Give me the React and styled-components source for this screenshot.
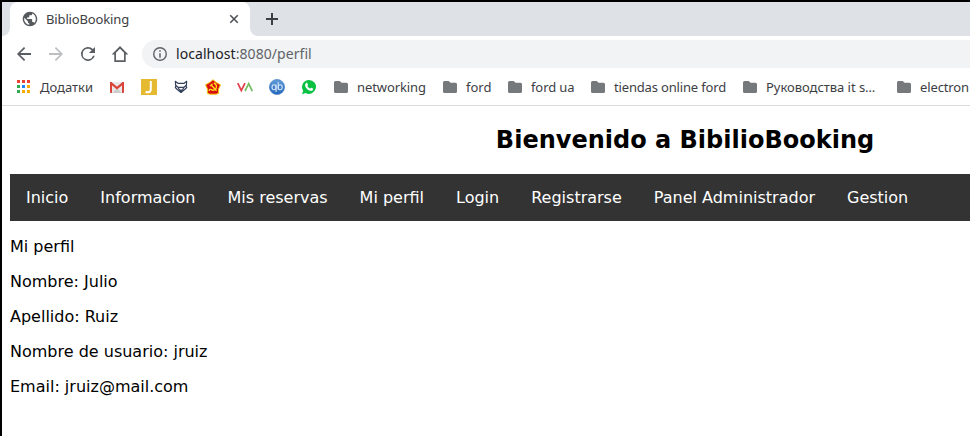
import React from "react";
import styled, { createGlobalStyle } from "styled-components";

const Global = createGlobalStyle`
  * { box-sizing: border-box; }
  html, body { margin: 0; padding: 0; background: #fff; overflow: hidden; }
`;

const Window = styled.div`
  width: 970px;
  height: 436px;
  overflow: hidden;
  background: #fff;
  border-top: 2px solid #000;
  border-left: 2px solid #000;
  font-family: "Noto Sans", sans-serif;
  color: #3c4043;
`;

const TabStrip = styled.div`
  display: flex;
  height: 34px;
  background: linear-gradient(#dee1e6, #dee1e6) 0 0 / 100% 12px no-repeat;
`;

const StripStart = styled.div`
  width: 8px;
  flex: none;
  background: #dee1e6;
  border-bottom-right-radius: 8px;
`;

const Tab = styled.div`
  display: flex;
  align-items: center;
  width: 240px;
  flex: none;
  padding: 0 10px 0 12px;
  background: #fff;
  border-radius: 8px 8px 0 0;
  font-size: 13px;
`;

const TabTitle = styled.span`
  flex: 1;
  margin-left: 8px;
  line-height: 18px;
  letter-spacing: -0.14px;
`;

const StripRest = styled.div`
  display: flex;
  align-items: center;
  flex: 1;
  padding-left: 15px;
  background: #dee1e6;
  border-bottom-left-radius: 8px;
`;

const Toolbar = styled.div`
  display: flex;
  align-items: center;
  height: 36px;
  padding-left: 11px;
`;

const ToolIcon = styled.svg`
  display: block;
  flex: none;
  width: 22px;
  height: 22px;
  margin-right: 10px;
  fill: ${(p) => (p.$muted ? "#bdbfc1" : "#5a5e63")};
`;

const AddressBar = styled.div`
  display: flex;
  align-items: center;
  flex: 1;
  height: 28px;
  margin-left: 1px;
  padding-left: 10px;
  border-radius: 14px 0 0 14px;
  background: #f1f3f4;
  font-size: 14px;
  line-height: 20px;
  letter-spacing: 0.06px;
  color: #5f6368;
`;

const Host = styled.span`
  margin-left: 8px;
  color: #202124;
`;

const Bookmarks = styled.div`
  display: flex;
  align-items: center;
  height: 34px;
  padding: 0 0 3px 13px;
  border-bottom: 1px solid #dadce0;
  font-size: 13px;
  line-height: 18px;
  white-space: nowrap;
`;

const Bookmark = styled.div`
  display: flex;
  align-items: center;
  flex: none;
  width: ${(p) => p.$w}px;
`;

const BookmarkLabel = styled.span`
  margin-left: ${(p) => p.$gap || 8}px;
  letter-spacing: ${(p) => p.$track || 0}px;
`;

const Glyph = styled.svg`
  display: block;
  flex: none;
  width: ${(p) => p.$s || 16}px;
  height: ${(p) => p.$s || 16}px;
`;

const Page = styled.main`
  width: 1366px;
  padding: 18px 8px 0;
  font-family: "DejaVu Sans", sans-serif;
  font-size: 16px;
  line-height: 19px;
  color: #000;
`;

const Title = styled.h2`
  margin: 0 0 18px;
  font-size: 24px;
  line-height: 32px;
  font-weight: bold;
  text-align: center;
`;

const Nav = styled.nav`
  display: flex;
  height: 47px;
  background: #333;
`;

const NavLink = styled.a`
  padding: 14px 16px;
  color: #fff;
`;

const Line = styled.p`
  margin: 16px 0;
`;

const Folder = () => (
  <Glyph viewBox="0 0 16 16">
    <path fill="#75797c" d="M2.500 2h4.200l1.800 1.800h5A1.500 1.500 0 0 1 15 5.300v7.200A1.500 1.500 0 0 1 13.500 14h-11A1.500 1.500 0 0 1 1 12.500v-9A1.500 1.500 0 0 1 2.500 2z" />
  </Glyph>
);

const Apps = () => {
  const colors = ["#ea4335", "#ea4335", "#ea4335", "#34a853", "#1a85f5", "#f9ab00", "#34a853", "#f9ab00", "#f9ab00"];
  return (
    <Glyph viewBox="0 0 16 16" shapeRendering="crispEdges">
      {colors.map((c, i) => (
        <rect key={i} x={2 + (i % 3) * 5} y={1 + Math.floor(i / 3) * 5} width="3" height="3" fill={c} />
      ))}
    </Glyph>
  );
};

const Mail = () => (
  <Glyph viewBox="0 0 16 16">
    <path fill="#e9e7e7" d="M1 3h14v11H1z" />
    <path fill="#cfcccc" d="M3.500 14 8 9l4.500 5z" />
    <path fill="#d9453a" d="M1 3h2v11H2a1 1 0 0 1-1-1zM13 3h2v10a1 1 0 0 1-1 1h-1z" />
    <path fill="none" stroke="#d9453a" strokeWidth="2.200" d="M1.700 3.800 8 9l6.300-5.200" />
  </Glyph>
);

const JobSite = () => (
  <Glyph viewBox="0 0 16 16">
    <path fill="#e5ba31" d="M0 0h16v16H0z" />
    <path fill="none" stroke="#fff" strokeWidth="2" d="M9.800 2v8.300c0 2-1 3-2.800 3-.8 0-1.600-.2-2.400-.7" />
  </Glyph>
);

const Fox = () => (
  <Glyph viewBox="0 0 16 16" fill="none" stroke="#33415b" strokeWidth="1.200" strokeLinejoin="round">
    <path d="M2.300 2.300 5.200 4.400h5.600l2.900-2.100-.5 5.200.5 1-2 2L8 13.500l-3.700-3-2-2 .5-1z" />
    <path d="M3 6.500 5 8.300h6l2-1.800M5 8.300 6.500 11h3L11 8.300" />
    <path fill="#33415b" d="M6.800 11.500h2.400L8 13z" />
  </Glyph>
);

const Emblem = () => (
  <Glyph viewBox="0 0 16 16">
    <path fill="#d90e0e" stroke="#f2d311" strokeWidth="1" strokeLinejoin="round" d="M8 .7 11 3.300l4.500 2.500-1.900 4.200.1 4.300-2.600.9H4.900l-2.600-.9.1-4.300L.5 5.800 5 3.300z" />
    <path fill="none" stroke="#ffe51d" strokeWidth="1.300" d="M8.800 4c3.200.8 3.700 5.300.6 7-1.500.6-3 .1-4.200-1M5 7l2.500-2M6.200 6l5.300 5.800M5 10.200l-1.200 1.600" />
  </Glyph>
);

const Va = () => (
  <Glyph viewBox="0 0 16 16" fill="none" strokeWidth="1.700">
    <path stroke="#e43d4b" d="m.8 4.200 3.500 7.300L8 4.200" />
    <path stroke="#75bd62" d="m8 12 3.700-7.300L15.300 12" />
  </Glyph>
);

const Qb = () => (
  <Glyph viewBox="0 0 16 16">
    <defs>
      <linearGradient id="qbFill" x2="0" y2="1">
        <stop stopColor="#629bd8" />
        <stop offset="1" stopColor="#2467bd" />
      </linearGradient>
    </defs>
    <circle cx="8" cy="8" r="7.600" fill="url(#qbFill)" stroke="#3b75bd" strokeWidth=".6" />
    <g fill="none" stroke="#d3e5f8" strokeWidth="1.100">
      <ellipse cx="5" cy="8.200" rx="2" ry="2.500" />
      <path d="M7.100 5.500v7.500M9.200 3v7.700" />
      <ellipse cx="11.200" cy="8.200" rx="2" ry="2.500" />
    </g>
  </Glyph>
);

const Phone = () => (
  <Glyph viewBox="0 0 16 16">
    <path fill="#0bc143" d="M8 .9a7 7 0 1 1-3.300 13.200L1 15.200l1.200-3.500A7 7 0 0 1 8 .9z" />
    <path fill="#fff" d="M5 4.200c.5-.5 1-.4 1.300.1l.7 1.500c.1.500-.5.900-.7 1.300.7 1.200 1.500 2 2.800 2.600.5-.4.800-1 1.200-.9l1.600.8c.5.300.1 1.400-.4 1.800-1 .8-2.500.5-4.200-.5C5.500 9.700 4.300 8 4.100 6.500c0-1 .3-1.700.9-2.300z" />
  </Glyph>
);

const siteIcons = [Mail, JobSite, Fox, Emblem, Va, Qb, Phone];
const folders = [
  ["networking", 109, -0.1],
  ["ford", 65, 0],
  ["ford ua", 83, -0.1],
  ["tiendas online ford", 152, -0.16],
  ["Руководства it s…", 154, -0.04],
  ["electron", 74, -0.12],
];
const links = ["Inicio", "Informacion", "Mis reservas", "Mi perfil", "Login", "Registrarse", "Panel Administrador", "Gestion"];
const profile = ["Mi perfil", "Nombre: Julio", "Apellido: Ruiz", "Nombre de usuario: jruiz", "Email: jruiz@mail.com"];

const toolBox = "-0.57 -0.57 25.14 25.14";

export default function App() {
  return (
    <>
      <Global />
      <Window>
        <TabStrip>
          <StripStart />
          <Tab>
            <Glyph viewBox="1 1 22 22">
              <path fill="#55595e" d="M12 2C6.480 2 2 6.480 2 12s4.480 10 10 10 10-4.480 10-10S17.520 2 12 2zm-1 17.930c-3.950-.490-7-3.850-7-7.930 0-.620.080-1.210.210-1.790L9 15v1c0 1.100.9 2 2 2v1.930zm6.900-2.540c-.260-.810-1-1.390-1.900-1.390h-1v-3c0-.550-.450-1-1-1H8v-2h2c.550 0 1-.450 1-1V7h2c1.100 0 2-.9 2-2v-.410c2.930 1.190 5 4.060 5 7.410 0 2.080-.8 3.970-2.100 5.390z" />
            </Glyph>
            <TabTitle>BiblioBooking</TabTitle>
            <Glyph viewBox="0 0 16 16" $s={12}>
              <path fill="none" stroke="#4d5156" strokeWidth="2.100" d="m3 3 10 10M13 3 3 13" />
            </Glyph>
          </Tab>
          <StripRest>
            <Glyph viewBox="0 0 14 14" $s={14}>
              <path fill="#3c4043" d="M6 1h2v5h5v2H8v5H6V8H1V6h5z" />
            </Glyph>
          </StripRest>
        </TabStrip>
        <Toolbar>
          <ToolIcon viewBox={toolBox}><path d="M20 11H7.830l5.590-5.590L12 4l-8 8 8 8 1.410-1.410L7.830 13H20z" /></ToolIcon>
          <ToolIcon viewBox={toolBox} $muted><path d="m12 4-1.410 1.410L16.170 11H4v2h12.170l-5.580 5.590L12 20l8-8z" /></ToolIcon>
          <ToolIcon viewBox={toolBox}><path d="M17.650 6.350A8 8 0 1 0 19.730 14h-2.080A6 6 0 1 1 12 6c1.660 0 3.140.690 4.220 1.780L13 11h7V4z" /></ToolIcon>
          <ToolIcon viewBox={toolBox}><path fillRule="evenodd" d="M12 3 2.500 12.500h3V21h13v-8.500h3zm0 2.900 4.600 4.600V19H7.400v-8.500z" /></ToolIcon>
          <AddressBar>
            <Glyph viewBox="0 0 16 16">
              <circle cx="8" cy="8" r="6.300" fill="none" stroke="#5f6368" strokeWidth="1.400" />
              <path fill="#5f6368" d="M7.250 4.300h1.500v1.500h-1.500zM7.250 7.200h1.500v4.500h-1.500z" />
            </Glyph>
            <Host>localhost</Host>:8080/perfil
          </AddressBar>
        </Toolbar>
        <Bookmarks>
          <Bookmark $w={94}>
            <Apps />
            <BookmarkLabel $gap={9}>Додатки</BookmarkLabel>
          </Bookmark>
          {siteIcons.map((Icon, i) => (
            <Bookmark key={i} $w={32}><Icon /></Bookmark>
          ))}
          {folders.map(([name, w, track]) => (
            <Bookmark key={name} $w={w}>
              <Folder />
              <BookmarkLabel $track={track}>{name}</BookmarkLabel>
            </Bookmark>
          ))}
        </Bookmarks>
        <Page>
          <Title>Bienvenido a BibilioBooking</Title>
          <Nav>{links.map((l) => <NavLink key={l}>{l}</NavLink>)}</Nav>
          {profile.map((l) => <Line key={l}>{l}</Line>)}
        </Page>
      </Window>
    </>
  );
}
